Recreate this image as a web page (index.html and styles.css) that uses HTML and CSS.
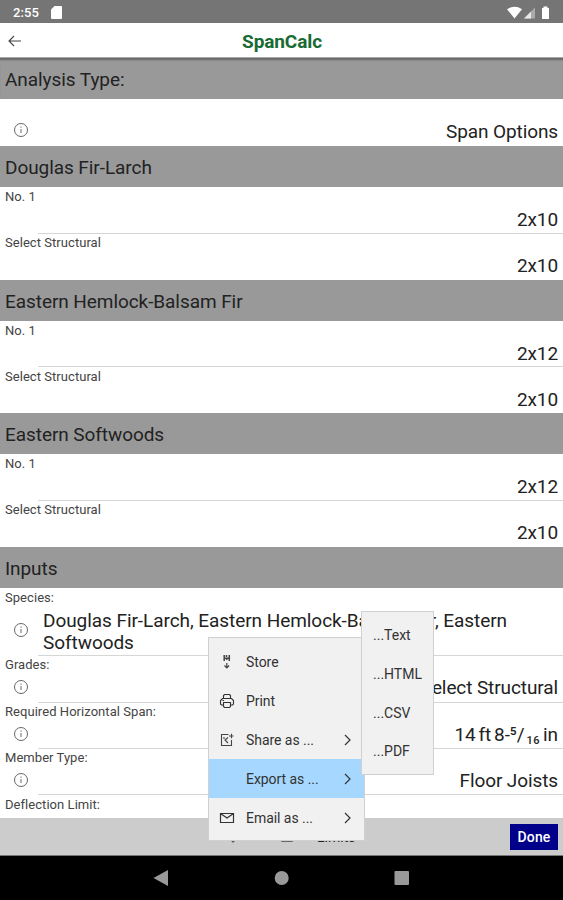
FILE: index.html
```html
<!DOCTYPE html>
<html lang="en">
<head>
<meta charset="utf-8">
<title>SpanCalc</title>
<link rel="stylesheet" href="styles.css">
</head>
<body>
<svg width="0" height="0" class="defs">
  <symbol id="info" viewBox="0 0 16 16"><circle cx="8" cy="8" r="6.5" fill="none" stroke="#666" stroke-width="1"/><path d="M8 7v4M8 4.6v1.2" stroke="#777" stroke-width="1.1" fill="none"/></symbol>
  <symbol id="chev" viewBox="0 0 10 12"><path d="M2 1l5 5-5 5" fill="none" stroke="#333" stroke-width="1.2"/></symbol>
</svg>
<div class="status">
  <span class="clock">2:55</span>
  <svg class="sd" width="11" height="13" viewBox="0 0 11 13"><path d="M3.5 0H10a1 1 0 0 1 1 1v11a1 1 0 0 1-1 1H1a1 1 0 0 1-1-1V3.500z" fill="#fff"/></svg>
  <svg class="signals" width="44" height="14" viewBox="0 0 44 14"><path d="M0 3.200Q7.500-1.700 15 3.200L7.500 12.500z" fill="#fff"/><path d="M28 1.500V12.500H17z" fill="#aaa"/><path d="M24 5.500V12.500H17z" fill="#e8e8e8"/><path d="M35 2h1.500V.5h4V2H42V13h-7z" fill="#fff"/></svg>
</div>
<header class="header">
  <svg class="back" width="14" height="12" viewBox="0 0 14 12"><path d="M13 6H1M6 1L1 6l5 5" fill="none" stroke="#444" stroke-width="1.100"/></svg>
  <h1>SpanCalc</h1>
</header>
<main class="list">
  <h2>Analysis Type:</h2>
  <div class="row analysis"><svg class="info"><use href="#info"/></svg><span class="value">Span Options</span></div>
  <h2>Douglas Fir-Larch</h2>
  <div class="row lined"><label>No. 1</label><span class="value">2x10</span></div>
  <div class="row"><label>Select Structural</label><span class="value">2x10</span></div>
  <h2>Eastern Hemlock-Balsam Fir</h2>
  <div class="row lined"><label>No. 1</label><span class="value">2x12</span></div>
  <div class="row"><label>Select Structural</label><span class="value">2x10</span></div>
  <h2>Eastern Softwoods</h2>
  <div class="row lined"><label>No. 1</label><span class="value">2x12</span></div>
  <div class="row"><label>Select Structural</label><span class="value">2x10</span></div>
  <h2>Inputs</h2>
  <div class="row lined species"><label>Species:</label><svg class="info"><use href="#info"/></svg><span class="value">Douglas Fir-Larch, Eastern Hemlock-Balsam Fir, Eastern Softwoods</span></div>
  <div class="row lined grades"><label>Grades:</label><svg class="info"><use href="#info"/></svg><span class="value">No. 1, Select Structural</span></div>
  <div class="row lined"><label>Required Horizontal Span:</label><svg class="info"><use href="#info"/></svg><span class="value fraction">14 ft 8-⁵/<small>16</small> in</span></div>
  <div class="row lined"><label>Member Type:</label><svg class="info"><use href="#info"/></svg><span class="value">Floor Joists</span></div>
  <div class="row"><label>Deflection Limit:</label></div>
</main>
<footer class="toolbar">
  <svg class="tool-a" width="8" height="14" viewBox="0 0 8 14"><path d="M4 1v8" fill="none" stroke="#444" stroke-width="1.200"/><circle cx="4" cy="11" r="1.500" fill="#555"/></svg>
  <svg class="tool-b" width="12" height="11" viewBox="0 0 12 11"><path d="M1 1h10v9H1z" fill="none" stroke="#444" stroke-width="1.500"/></svg>
  <span class="limits">Limits</span>
  <button>Done</button>
</footer>
<nav class="nav">
  <svg width="563" height="44" viewBox="0 0 563 44"><path d="M153.500 22L168 14v16z" fill="#999"/><circle cx="281.700" cy="22" r="7" fill="#999"/><rect x="394.500" y="15" width="14.500" height="14" rx="1" fill="#999"/></svg>
</nav>
<div class="menu">
  <div class="item"><svg width="16" height="16" viewBox="0 0 16 16"><path d="M5.200 1v6M10.300 1v6M7.500 1v2M5 4.300h5.500M7.800 4.500v1.500" fill="none" stroke="#444" stroke-width="1.500"/><path d="M7.800 9v5M5.500 11.500L7.800 13.800l2.300-2.300" fill="none" stroke="#444" stroke-width="1.200"/></svg><span>Store</span></div>
  <div class="item"><svg width="16" height="16" viewBox="0 0 16 16"><path d="M4.500 5.500v-3l1-1h5l1 1v3M4 12H2.500L1.500 11V7.500l2-2h9l2 2V11l-1 1H12M4.500 9.500h7v4l-1 1h-5l-1-1zM3.500 7.500h1.500" fill="none" stroke="#333" stroke-width="1.100"/></svg><span>Print</span></div>
  <div class="item"><svg width="16" height="16" viewBox="0 0 16 16"><path d="M9.500 2.500h-7v11h10V8M10 4h4.500M12.500 1.800v4.400M9 5.500L6 8l3 3M5 5v2" fill="none" stroke="#444" stroke-width="1.100"/></svg><span>Share as ...</span><svg class="chev"><use href="#chev"/></svg></div>
  <div class="item active"><i></i><span>Export as ...</span><svg class="chev"><use href="#chev"/></svg></div>
  <div class="item"><svg width="16" height="16" viewBox="0 0 16 16"><path d="M1.500 3.500h13v9h-13zM1.500 3.500L8 8l6.500-4.500" fill="none" stroke="#333" stroke-width="1.200"/></svg><span>Email as ...</span><svg class="chev"><use href="#chev"/></svg></div>
</div>
<div class="submenu">
  <div>...Text</div><div>...HTML</div><div>...CSV</div><div>...PDF</div>
</div>
</body>
</html>
```
FILE: styles.css
```css
* { box-sizing: border-box; }
body { margin: 0; width: 563px; height: 900px; overflow: hidden; position: relative; display: flex; flex-direction: column; background: #fff; color: #222; font-family: Roboto, "Liberation Sans", sans-serif; }
.defs { position: absolute; }
.status { height: 23px; flex: none; background: #757575; display: flex; align-items: center; padding: 2px 12px 0 13px; color: #fff; }
.clock { font-size: 13px; font-weight: 500; letter-spacing: .1px; }
.sd { margin-left: 12px; }
.signals { margin-left: auto; }
.header { height: 35px; flex: none; display: grid; grid-template-columns: 22px 1fr 22px; align-items: center; padding: 3px 0 0 8px; border-bottom: 1px solid #aaa; }
.header h1 { margin: 0; padding-right: 7px; text-align: center; font-size: 19px; line-height: 24px; font-weight: 700; color: #176b33; letter-spacing: -.1px; }
.back { margin-top: -2px; }
.list { height: 760px; flex: none; overflow: hidden; }
h2 { margin: 0; height: 41px; padding: 1px 5px 0; background: #999; font-size: 19px; line-height: 42px; font-weight: 400; letter-spacing: -.07px; color: #222; }
h2:first-child { box-shadow: inset 0 3px 2px -1px #666; }
.row { position: relative; height: 46.250px; display: grid; grid-template-columns: 38px 1fr; grid-template-rows: 20px 1fr; padding: 0 5px 0 0; }
.row label { grid-column: 1 / 3; grid-row: 1; padding-left: 5px; font-size: 13px; line-height: 20.500px; color: #444; letter-spacing: .05px; }
.row .info { grid-column: 1; grid-row: 2; width: 16px; height: 16px; margin: 4px 0 0 13px; }
.row .value { grid-column: 2; grid-row: 2; text-align: right; font-size: 19px; line-height: 22px; padding-top: 2.200px; letter-spacing: -.1px; }
.lined::after { content: ""; position: absolute; left: 38px; right: 0; bottom: -.5px; height: 1px; background: #d6d6d6; }
.analysis { height: 47px; }
.analysis .info { margin-top: 3px; }
.species { height: 67.500px; }
.species .info { margin-top: 14px; }
.row.species .value { text-align: left; padding: 2px 0 0 5px; letter-spacing: -.06px; }
.grades { height: 47px; }
.row .fraction { letter-spacing: -.1px; word-spacing: -1.700px; }
.value small { font-size: 11px; font-weight: 500; position: relative; top: 3px; letter-spacing: .6px; margin-left: 2px; }
.toolbar { height: 38px; flex: none; background: #ccc; display: flex; align-items: center; padding: 0 5px 0 229px; border-bottom: 1px solid #777; }
.tool-b { margin-left: 44px; }
.limits { margin-left: 24px; font-size: 14px; }
.toolbar button { margin-left: auto; width: 48px; height: 26px; border: 0; padding: 0; background: #00008b; color: #fff; font: 500 14px Roboto, sans-serif; letter-spacing: .1px; }
.nav { height: 44px; flex: none; background: #000; }
.nav svg { display: block; }
.menu { position: absolute; left: 208px; top: 637px; width: 157px; height: 204px; padding: 4.500px 0; background: #f1f1f1; border: 1px solid #d0d0d0; }
.item { height: 38.900px; display: grid; grid-template-columns: 16px 1fr 10px; column-gap: 11px; align-items: center; padding: 0 12px 0 10px; font-size: 14px; color: #333; letter-spacing: -.05px; }
.item .chev { margin-left: 1px; }
.active { background: #a6d8ff; }
.chev { width: 10px; height: 12px; }
.submenu { position: absolute; left: 361px; top: 611px; width: 73px; height: 164px; padding: 4px 0 0 11px; background: #f1f1f1; border: 1px solid #d0d0d0; font-size: 14px; line-height: 38.800px; color: #333; letter-spacing: 0; }
```
